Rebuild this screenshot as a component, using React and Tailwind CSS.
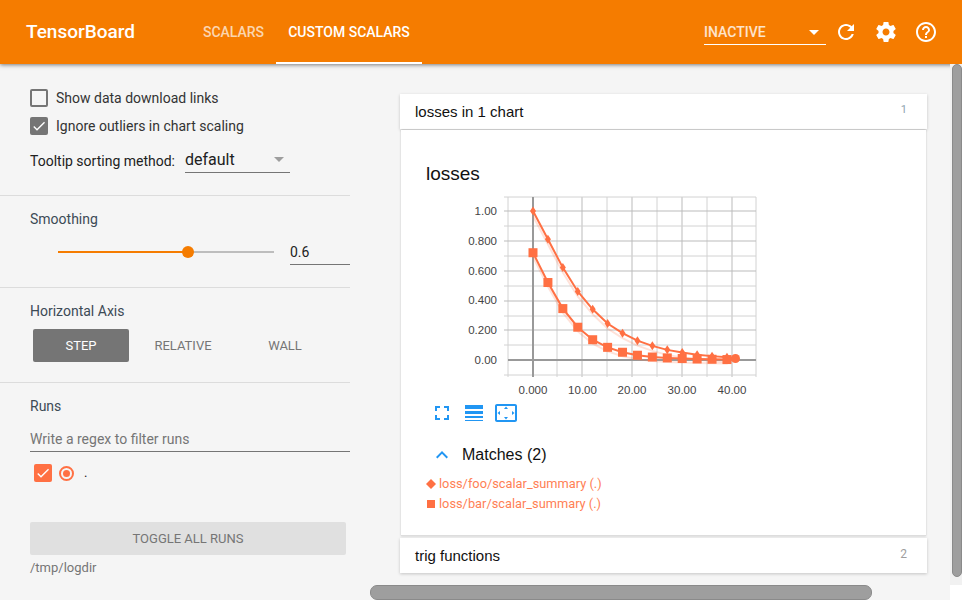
const font = { fontFamily: 'Roboto, sans-serif' };
const arial = { fontFamily: '"Liberation Sans", sans-serif' };

const Icon = ({ d, className }) => (
    <svg viewBox="0 0 24 24" className={className} fill="currentColor">
        <path d={d} />
    </svg>
);

const icons = {
    refresh: 'M17.65 6.35C16.2 4.9 14.21 4 12 4c-4.42 0-7.99 3.58-7.99 8s3.57 8 7.99 8c3.73 0 6.84-2.55 7.73-6h-2.08c-.82 2.33-3.04 4-5.65 4-3.31 0-6-2.69-6-6s2.69-6 6-6c1.66 0 3.14.69 4.22 1.78L13 11h7V4l-2.35 2.35z',
    settings: 'M19.43 12.98c.04-.32.07-.64.07-.98s-.03-.66-.07-.98l2.11-1.65c.19-.15.24-.42.12-.64l-2-3.46c-.12-.22-.39-.3-.61-.22l-2.49 1c-.52-.4-1.08-.73-1.69-.98l-.38-2.65C14.46 2.18 14.25 2 14 2h-4c-.25 0-.46.18-.49.42l-.38 2.65c-.61.25-1.17.59-1.69.98l-2.49-1c-.23-.09-.49 0-.61.22l-2 3.46c-.13.22-.07.49.12.64l2.11 1.65c-.04.32-.07.65-.07.98s.03.66.07.98l-2.11 1.65c-.19.15-.24.42-.12.64l2 3.46c.12.22.39.3.61.22l2.49-1c.52.4 1.08.73 1.69.98l.38 2.65c.03.24.24.42.49.42h4c.25 0 .46-.18.49-.42l.38-2.65c.61-.25 1.17-.59 1.69-.98l2.49 1c.23.09.49 0 .61-.22l2-3.46c.12-.22.07-.49-.12-.64l-2.11-1.65zM12 15.5c-1.93 0-3.5-1.57-3.5-3.5s1.57-3.5 3.5-3.5 3.5 1.57 3.5 3.5-1.57 3.5-3.5 3.5z',
    help: 'M11 18h2v-2h-2v2zm1-16C6.48 2 2 6.48 2 12s4.48 10 10 10 10-4.48 10-10S17.52 2 12 2zm0 18c-4.41 0-8-3.59-8-8s3.59-8 8-8 8 3.59 8 8-3.59 8-8 8zm0-14c-2.21 0-4 1.79-4 4h2c0-1.1.9-2 2-2s2 .9 2 2c0 2-3 1.75-3 5h2c0-2.25 3-2.5 3-5 0-2.21-1.79-4-4-4z',
    fullscreen: 'M7 14H5v5h5v-2H7v-3zm-2-4h2V7h3V5H5v5zm12 7h-3v2h5v-5h-2v3zM14 5v2h3v3h2V5h-5z',
    lineWeight: 'M3 17h18v-2H3v2zm0 3h18v-1H3v1zm0-7h18v-3H3v3zm0-9v4h18V4H3z',
    overscan: 'M12.01 5.5L10 8h4l-1.99-2.5zM18 10v4l2.5-1.99L18 10zM6 10l-2.5 2.01L6 14v-4zm8 6h-4l2.01 2.5L14 16zm7-13H3c-1.1 0-2 .9-2 2v14c0 1.1.9 2 2 2h18c1.1 0 2-.9 2-2V5c0-1.1-.9-2-2-2zm0 16.01H3V4.99h18v14.02z',
    expandLess: 'M12 8l-6 6 1.41 1.41L12 10.83l4.59 4.58L18 14z',
    check: 'M9 16.17L4.83 12l-1.42 1.41L9 19 21 7l-1.41-1.41z',
};

const Check = ({ checked, color = 'bg-[#757575]' }) => (
    <div className={`w-[18px] h-[18px] rounded-[2px] flex items-center justify-center shrink-0 ${checked ? color : 'border-2 border-[#757575]'}`}>
        {checked && <Icon d={icons.check} className="w-[16px] h-[16px] text-white" />}
    </div>
);

const foo = [1, 0.81, 0.62, 0.46, 0.34, 0.245, 0.18, 0.13, 0.095, 0.068, 0.05, 0.036, 0.026, 0.018];
const bar = [0.72, 0.52, 0.345, 0.22, 0.136, 0.085, 0.052, 0.032, 0.02, 0.014, 0.01, 0.007, 0.005, 0.003];
const px = (i) => 533 + i * 14.92;
const py = (v) => 360 - v * 149;
const line = (vals, end, shift = 0) =>
    vals.map((v, i) => `${px(i)},${py(v) + shift}`).join(' ') + ` 735.5,${py(end)}`;

const Chart = () => {
    const minorX = [508, 557, 607, 657, 707, 756];
    const majorX = [582, 632, 682, 732];
    const minorY = [197, 226, 256, 286, 316, 345, 375];
    const majorY = [211, 241, 271, 301, 330];
    const yLabels = [['1.00', 215], ['0.800', 245], ['0.600', 275], ['0.400', 304], ['0.200', 334], ['0.00', 364]];
    const xLabels = [['0.000', 533], ['10.00', 582.5], ['20.00', 632], ['30.00', 682], ['40.00', 732]];
    return (
        <svg viewBox="426 190 340 210" className="w-[340px] h-[210px] block">
            {minorX.map((x) => <line key={x} x1={x} x2={x} y1="197" y2="377" stroke="#d2d2d2" />)}
            {majorX.map((x) => <line key={x} x1={x} x2={x} y1="197" y2="377" stroke="#bbbbbb" />)}
            {minorY.map((y) => <line key={y} x1="504" x2="756" y1={y} y2={y} stroke="#d2d2d2" />)}
            {majorY.map((y) => <line key={y} x1="504" x2="756" y1={y} y2={y} stroke="#bbbbbb" />)}
            <line x1="533" x2="533" y1="197" y2="377" stroke="#999999" strokeWidth="2" />
            <line x1="508" x2="756" y1="360" y2="360" stroke="#999999" strokeWidth="2" />
            {yLabels.map(([t, y]) => (
                <text key={t} x="497" y={y} textAnchor="end" fontSize="11.5" fill="#444444" fontFamily="Liberation Sans">{t}</text>
            ))}
            {xLabels.map(([t, x]) => (
                <text key={t} x={x} y="393.5" textAnchor="middle" fontSize="11.5" fill="#444444" fontFamily="Liberation Sans">{t}</text>
            ))}
            <polyline points={line(foo, 0.012, 5)} fill="none" stroke="#ff7043" strokeOpacity="0.2" strokeWidth="2" />
            <polyline points={line(bar, 0.003, 4)} fill="none" stroke="#ff7043" strokeOpacity="0.2" strokeWidth="2" />
            <polyline points={line(foo, 0.012)} fill="none" stroke="#ff7043" strokeWidth="2" />
            <polyline points={line(bar, 0.003)} fill="none" stroke="#ff7043" strokeWidth="2" />
            {foo.map((v, i) => (
                <polygon
                    key={i}
                    points={`${px(i)},${py(v) - 4.5} ${px(i) + 3},${py(v)} ${px(i)},${py(v) + 4.5} ${px(i) - 3},${py(v)}`}
                    fill="#ff7043"
                />
            ))}
            {bar.map((v, i) => (
                <rect key={i} x={px(i) - 4.5} y={py(v) - 4.5} width="9" height="9" fill="#ff7043" />
            ))}
            <circle cx="735.5" cy="358.5" r="4.5" fill="#ff7043" />
        </svg>
    );
};

const App = () => {
    return (
        <div className="relative w-[962px] h-[600px] overflow-hidden bg-[#f5f5f5] flex flex-col" style={font}>
            {/* Toolbar */}
            <div className="relative z-10 h-[64px] shrink-0 bg-[#f57c00] flex items-center text-white shadow-[0_1px_4px_rgba(0,0,0,0.5)]">
                <div className="ml-[26px] w-[109px] text-[19px] font-medium whitespace-nowrap">TensorBoard</div>
                <div className="ml-[56px] flex h-full">
                    <div className="w-[85px] flex items-center justify-center text-[14px] font-medium text-white/70">SCALARS</div>
                    <div className="w-[146px] flex items-center justify-center text-[14px] font-medium border-b-2 border-white pt-[2px]">CUSTOM SCALARS</div>
                </div>
                <div className="ml-[282px] w-[122px] h-[25px] mt-[1px] border-b border-white flex items-center justify-between text-[14px] text-white/80 font-medium">
                    <span>INACTIVE</span>
                    <span className="mr-[7px] w-0 h-0 border-x-[5px] border-x-transparent border-t-[5px] border-t-white" />
                </div>
                <div className="flex">
                    <div className="w-[40px] h-[40px] flex items-center justify-center"><Icon d={icons.refresh} className="w-[24px] h-[24px]" /></div>
                    <div className="w-[40px] h-[40px] flex items-center justify-center"><Icon d={icons.settings} className="w-[24px] h-[24px]" /></div>
                    <div className="w-[40px] h-[40px] flex items-center justify-center"><Icon d={icons.help} className="w-[24px] h-[24px]" /></div>
                </div>
            </div>

            <div className="flex flex-1 min-h-0">
                {/* Sidebar */}
                <div className="w-[350px] shrink-0 text-[14px]">
                    <div className="h-[132px] border-b border-[#dcdcdc] pl-[30px] pt-[25px] text-[#333333]">
                        <div className="flex items-center h-[18px] gap-[8px]"><Check /><span>Show data download links</span></div>
                        <div className="flex items-center h-[18px] gap-[8px] mt-[10px]"><Check checked /><span>Ignore outliers in chart scaling</span></div>
                        <div className="flex items-start mt-[10px]">
                            <span className="mt-[6px] w-[155px] text-[#212121]">Tooltip sorting method:</span>
                            <div className="w-[105px] h-[28px] pt-[2px] border-b border-[#757575] flex items-center justify-between text-[16px] text-[#212121]">
                                <span>default</span>
                                <span className="mr-[6px] w-0 h-0 border-x-[5px] border-x-transparent border-t-[5px] border-t-[#9e9e9e]" />
                            </div>
                        </div>
                    </div>
                    <div className="h-[92px] border-b border-[#dcdcdc] pl-[30px] pt-[15px] text-[#3c4a55]">
                        <div className="leading-[17px]">Smoothing</div>
                        <div className="flex items-center mt-[11px]">
                            <div className="relative ml-[28px] w-[216px] h-[2px] bg-[#bdbdbd]">
                                <div className="h-full w-[130px] bg-[#f57c00]" />
                                <div className="absolute left-[124px] top-[-5px] w-[12px] h-[12px] rounded-full bg-[#f57c00]" />
                            </div>
                            <div className="ml-[16px] w-[60px] h-[26px] pt-[2px] border-b border-[#757575] flex items-center text-[#212121]">0.6</div>
                        </div>
                    </div>
                    <div className="h-[95px] border-b border-[#dcdcdc] pl-[30px] pt-[15px] text-[#3c4a55]">
                        <div className="leading-[17px]">Horizontal Axis</div>
                        <div className="flex mt-[9px] ml-[3px] text-[13px] text-[#757575] text-center">
                            <div className="w-[96px] h-[33px] rounded-[2px] bg-[#757575] text-white leading-[33px]">STEP</div>
                            <div className="w-[102px] h-[33px] leading-[33px] ml-[3px]">RELATIVE</div>
                            <div className="w-[102px] h-[33px] leading-[33px]">WALL</div>
                        </div>
                    </div>
                    <div className="pl-[30px] pt-[15px] text-[#3c4a55]">
                        <div className="leading-[17px]">Runs</div>
                        <div className="mt-[7px] h-[30px] border-b-[1.5px] border-[#757575] text-[#757575] flex items-end pb-[1px]">Write a regex to filter runs</div>
                        <div className="flex items-center mt-[12px] ml-[4px] h-[18px]">
                            <Check checked color="bg-[#ff7043]" />
                            <div className="ml-[7px] w-[15px] h-[15px] rounded-full border-2 border-[#ff7043] flex items-center justify-center">
                                <div className="w-[7px] h-[7px] rounded-full bg-[#ff7043]" />
                            </div>
                            <span className="ml-[10px] text-[#212121] text-[13px]">.</span>
                        </div>
                        <div className="mt-[40px] w-[316px] h-[33px] rounded-[2px] bg-[#e0e0e0] text-[13px] text-[#757575] flex items-center justify-center">TOGGLE ALL RUNS</div>
                        <div className="mt-[4px] text-[13px] text-[#757575] leading-[17px]">/tmp/logdir</div>
                    </div>
                </div>

                {/* Main */}
                <div className="pl-[50px] pt-[30px]">
                    <div className="w-[527px] h-[35px] bg-white shadow-[0_1px_3px_rgba(0,0,0,0.2)] flex items-center justify-between pl-[15px] pr-[20px] pt-[1px] text-[15px] text-[#111111]" style={arial}>
                        <span>losses in 1 chart</span>
                        <span className="text-[11px] text-[#90a4ae] mb-[4px]" style={font}>1</span>
                    </div>
                    <div className="ml-[1px] w-[525px] h-[406px] mt-[1px] bg-white border-b border-[#dddddd] shadow-[0_0_2px_rgba(0,0,0,0.2)] pl-[25px] pt-[32px]">
                        <div className="text-[19px] leading-[24px] text-[#111111]" style={arial}>losses</div>
                        <div className="mt-[4px]"><Chart /></div>
                        <div className="flex gap-[8px] ml-[4px] mt-[1px] text-[#2196f3]">
                            <Icon d={icons.fullscreen} className="w-[24px] h-[24px]" />
                            <Icon d={icons.lineWeight} className="w-[24px] h-[24px]" />
                            <Icon d={icons.overscan} className="w-[24px] h-[24px]" />
                        </div>
                        <div className="flex items-center gap-[8px] ml-[4px] mt-[18px] h-[24px]">
                            <Icon d={icons.expandLess} className="w-[24px] h-[24px] text-[#2196f3]" />
                            <span className="text-[16px] text-[#111111]" style={arial}>Matches (2)</span>
                        </div>
                        <div className="mt-[7px] text-[12.8px] text-[#ff7f55]">
                            <div className="flex items-center h-[20px]">
                                <svg viewBox="0 0 10 10" className="w-[10px] h-[10px] mr-[3px]"><polygon points="5,0 10,5 5,10 0,5" fill="#ff7043" /></svg>
                                <span>loss/foo/scalar_summary (.)</span>
                            </div>
                            <div className="flex items-center h-[20px]">
                                <div className="w-[8px] h-[8px] ml-[1px] mr-[4px] bg-[#ff7043]" />
                                <span>loss/bar/scalar_summary (.)</span>
                            </div>
                        </div>
                    </div>
                    <div className="w-[527px] h-[35px] mt-[2px] pt-[1px] bg-white shadow-[0_1px_3px_rgba(0,0,0,0.2)] flex items-center justify-between pl-[15px] pr-[20px] text-[15px] text-[#111111]" style={arial}>
                        <span>trig functions</span>
                        <span className="text-[12px] text-[#9e9e9e] mb-[4px]" style={font}>2</span>
                    </div>
                </div>
            </div>

            {/* Scrollbars */}
            <div className="absolute z-20 right-0 top-[64px] w-[12px] h-[521px] bg-[#f1f1f1] pl-[2px]">
                <div className="w-[10px] h-[513px] rounded-[5px] bg-[#9e9e9e] border border-[#8a8a8a]" />
            </div>
            <div className="absolute right-0 bottom-0 w-[12px] h-[15px] bg-white" />
            <div className="absolute left-[370px] top-[585px] w-[502px] h-[15px] rounded-[7px] bg-[#9e9e9e] border border-[#8a8a8a]" />
        </div>
    );
};

export default App;
